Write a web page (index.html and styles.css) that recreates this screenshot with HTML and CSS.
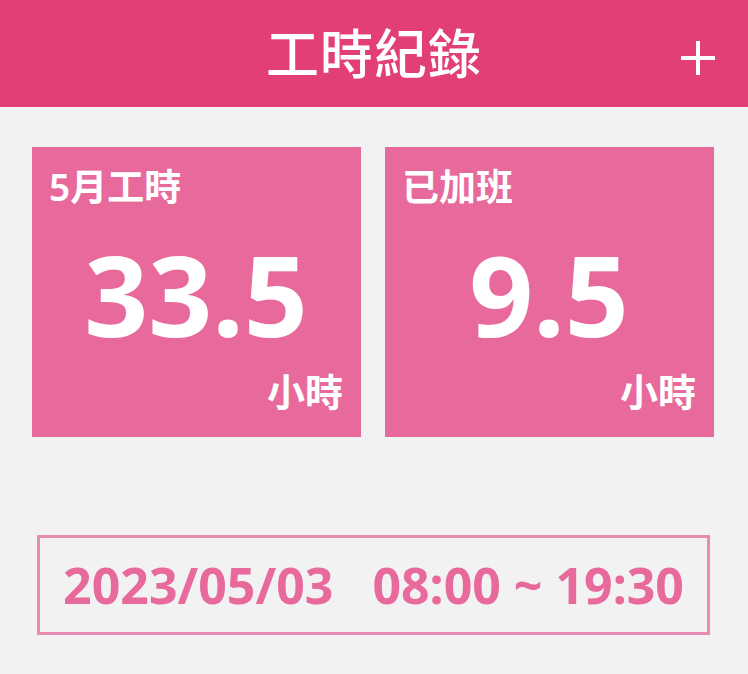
FILE: index.html
```html
<!DOCTYPE html>
<html lang="zh-Hant">
<head>
<meta charset="utf-8">
<link rel="stylesheet" href="styles.css">
</head>
<body>
<header class="topbar">
  <h1 class="title">工時紀錄</h1>
  <button class="add-btn" aria-label="新增">
    <svg width="36" height="36" viewBox="0 0 36 36"><path d="M18 1v34M1 18h34" stroke="#fff" stroke-width="4" fill="none"/></svg>
  </button>
</header>
<main class="content">
  <section class="cards">
    <div class="card">
      <div class="card-label">5月工時</div>
      <div class="card-value">33.5</div>
      <div class="card-unit">小時</div>
    </div>
    <div class="card">
      <div class="card-label">已加班</div>
      <div class="card-value">9.5</div>
      <div class="card-unit">小時</div>
    </div>
  </section>
  <section class="record">
    <span class="record-text">2023/05/03&nbsp;&nbsp;&nbsp;08:00 ~ 19:30</span>
  </section>
</main>
</body>
</html>
```
FILE: styles.css
```css
html, body {
  margin: 0;
  padding: 0;
  background: #f2f2f2;
  font-family: "Noto Sans", "Noto Sans CJK TC", sans-serif;
}
.topbar {
  height: 107px;
  background: #e23f77;
  display: flex;
  align-items: center;
  justify-content: center;
  position: relative;
}
.title {
  margin: 0;
  color: #fff;
  font-size: 53px;
  font-weight: 500;
  letter-spacing: 1px;
  line-height: 1;
}
.add-btn {
  position: absolute;
  right: 32px;
  top: 40px;
  width: 36px;
  height: 36px;
  padding: 0;
  border: 0;
  background: transparent;
  display: flex;
}
.content {
  padding: 40px 34px 0 32px;
}
.cards {
  display: grid;
  grid-template-columns: 329px 329px;
  gap: 24px;
}
.card {
  height: 290px;
  background: #e86a9c;
  color: #fff;
  display: flex;
  flex-direction: column;
  box-sizing: border-box;
  padding: 18px 18px 22px 17px;
}
.card-label {
  font-size: 37px;
  font-weight: 600;
  line-height: 1.2;
}
.card-value {
  font-size: 112px;
  font-weight: 700;
  line-height: 1;
  text-align: center;
  margin-top: 29px;
}
.card-unit {
  margin-top: auto;
  text-align: right;
  font-size: 38px;
  font-weight: 600;
  line-height: 1.2;
}
.record {
  margin: 98px 4px 0 5px;
  height: 100px;
  box-sizing: border-box;
  border: 3px solid #ea8ab0;
  display: flex;
  align-items: center;
  justify-content: center;
}
.record-text {
  color: #e8699b;
  font-size: 50px;
  font-weight: 700;
}
```
